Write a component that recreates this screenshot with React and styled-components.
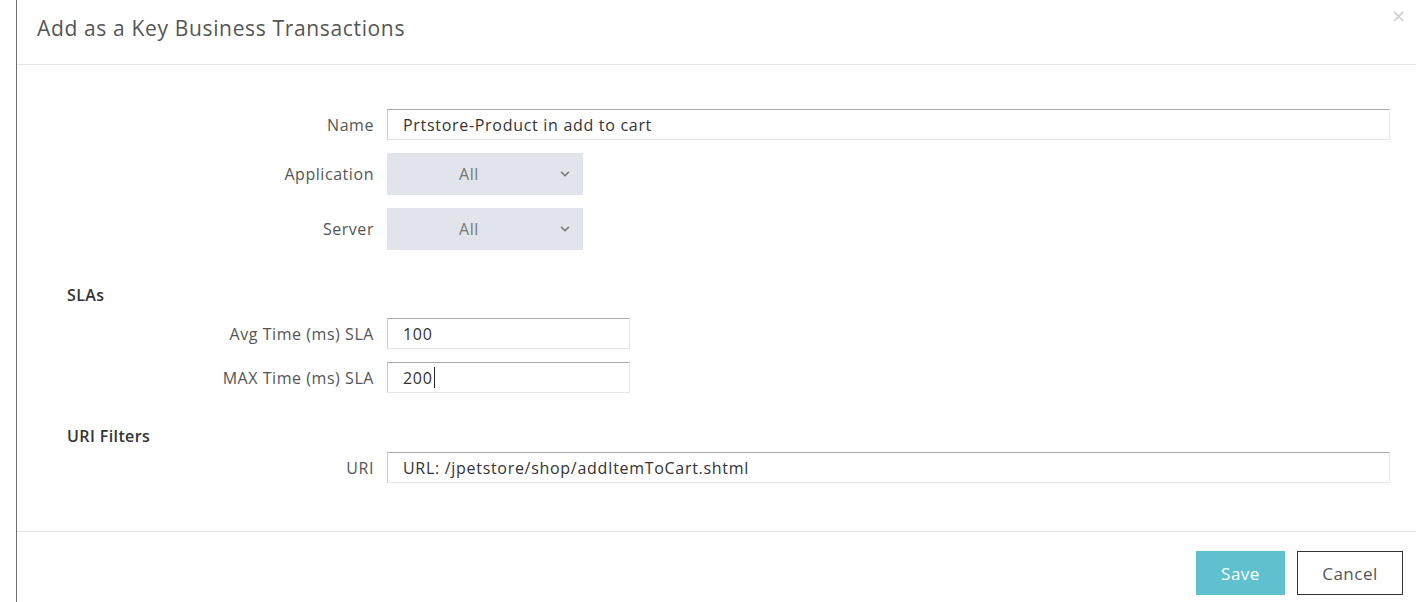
import React from 'react'
import styled, { createGlobalStyle } from 'styled-components'
import { ChevronDown } from 'lucide-react'

const GlobalStyle = createGlobalStyle`
  html, body {
    margin: 0;
    padding: 0;
    background: #fff;
  }
  body {
    font-family: 'Open Sans', 'Liberation Sans', sans-serif;
    color: #555;
  }
`

const Page = styled.div`
  height: 602px;
  padding-left: 16px;
  overflow: hidden;
`

const Modal = styled.div`
  width: 1399px;
  height: 602px;
  border-left: 1px solid #6e6e6e;
  display: flex;
  flex-direction: column;
  background: #fff;
`

const Header = styled.div`
  position: relative;
  flex-shrink: 0;
  height: 65px;
  border-bottom: 1px solid #e5e5e5;
  display: flex;
  align-items: center;
  padding: 0 20px 8px;
  box-sizing: border-box;
`

const Title = styled.h4`
  margin: 0;
  font-size: 21px;
  font-weight: 400;
  color: #555;
  letter-spacing: 0.65px;
`

const Close = styled.button`
  position: absolute;
  top: 7px;
  right: 10px;
  border: 0;
  background: none;
  padding: 0;
  font-family: 'DejaVu Sans', sans-serif;
  font-size: 18px;
  line-height: 18px;
  color: #d0d0d0;
  cursor: pointer;
`

const Body = styled.div`
  flex-shrink: 0;
  padding: 44px 26px 48px 0;
  border-bottom: 1px solid #e5e5e5;
`

const Row = styled.div`
  display: grid;
  grid-template-columns: 357px 1fr;
  column-gap: 13px;
  align-items: center;
  height: ${p => p.$h || 31}px;
  margin-top: ${p => p.$top ?? 13}px;
`

const Label = styled.label`
  text-align: right;
  font-size: 16px;
  letter-spacing: 0.55px;
  line-height: 20px;
  color: #555;
`

const Field = styled.div`
  box-sizing: border-box;
  width: ${p => p.$width || '100%'};
  height: 31px;
  display: flex;
  align-items: center;
  padding: 0 15px;
  border: 1px solid #e6e6e6;
  border-top-color: #a9a9a9;
  border-left-color: #c9c9c9;
  font-size: 16px;
  letter-spacing: 0.7px;
  color: #333;
`

const Caret = styled.span`
  display: inline-block;
  width: 1px;
  height: 21px;
  background: #222;
  margin-left: 1px;
`

const Select = styled.div`
  position: relative;
  box-sizing: border-box;
  width: 196px;
  height: 42px;
  padding-right: 32px;
  background: #e1e4ea;
  display: flex;
  align-items: center;
  justify-content: center;
  font-size: 16px;
  letter-spacing: 0.6px;
  color: #777;
`

const SelectIcon = styled.span`
  position: absolute;
  right: 11px;
  top: 14px;
  display: flex;
  color: #777;
`

const Section = styled.div`
  margin-top: ${p => p.$top}px;
  padding-left: 50px;
  font-size: 16px;
  font-weight: 600;
  letter-spacing: 0.4px;
  color: #333;
  line-height: 20px;
`

const Footer = styled.div`
  display: flex;
  justify-content: flex-end;
  gap: 12px;
  padding: 19px 13px 0 0;
`

const Button = styled.button`
  box-sizing: border-box;
  height: 44px;
  width: ${p => p.$primary ? 89 : 106}px;
  font-family: 'Open Sans', 'Liberation Sans', sans-serif;
  font-size: 17px;
  letter-spacing: 0.5px;
  border: 1px solid ${p => p.$primary ? '#5fc1cf' : '#333'};
  background: ${p => p.$primary ? '#5fc1cf' : '#fff'};
  color: ${p => p.$primary ? '#fff' : '#555'};
  cursor: pointer;
`

const Dropdown = ({ value }) => (
  <Select>
    {value}
    <SelectIcon>
      <ChevronDown size={14} strokeWidth={2.75} />
    </SelectIcon>
  </Select>
)

const App = () => (
  <Page>
    <GlobalStyle />
    <Modal>
      <Header>
        <Title>Add as a Key Business Transactions</Title>
        <Close aria-label="Close">×</Close>
      </Header>
      <Body>
        <Row $top={0}>
          <Label>Name</Label>
          <Field>Prtstore-Product in add to cart</Field>
        </Row>
        <Row $h={42}>
          <Label>Application</Label>
          <Dropdown value="All" />
        </Row>
        <Row $h={42}>
          <Label>Server</Label>
          <Dropdown value="All" />
        </Row>

        <Section $top={35}>SLAs</Section>
        <Row $top={13}>
          <Label>Avg Time (ms) SLA</Label>
          <Field $width="243px">100</Field>
        </Row>
        <Row>
          <Label>MAX Time (ms) SLA</Label>
          <Field $width="243px">200<Caret /></Field>
        </Row>

        <Section $top={33}>URI Filters</Section>
        <Row $top={6}>
          <Label>URI</Label>
          <Field>URL: /jpetstore/shop/addItemToCart.shtml</Field>
        </Row>
      </Body>
      <Footer>
        <Button $primary>Save</Button>
        <Button>Cancel</Button>
      </Footer>
    </Modal>
  </Page>
)

export default App
